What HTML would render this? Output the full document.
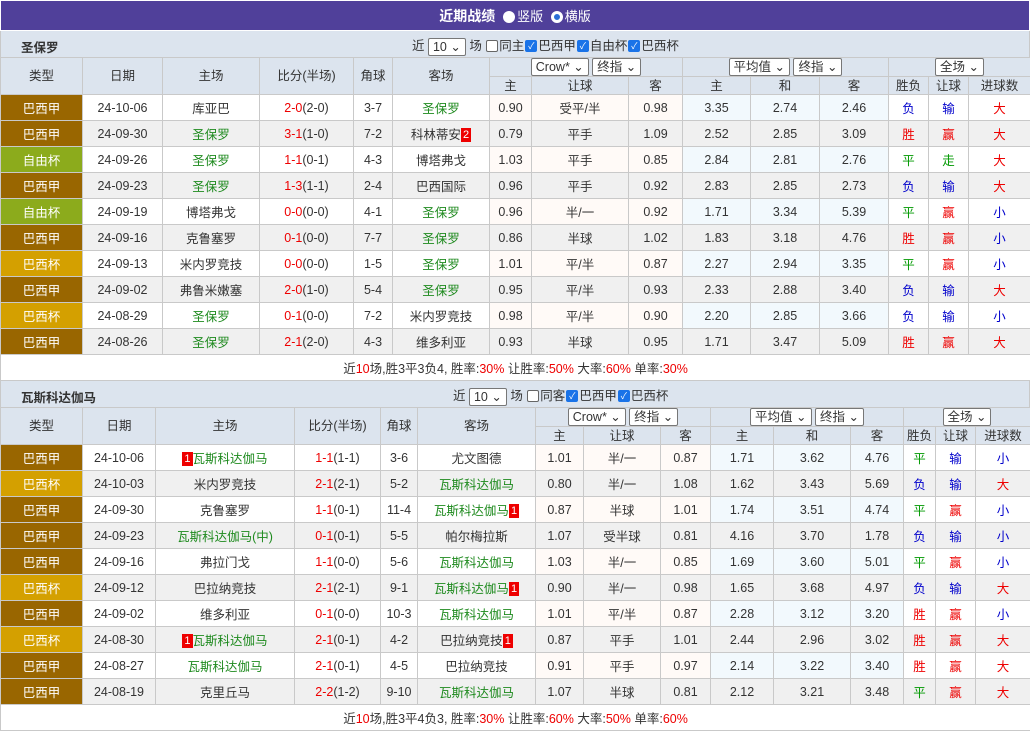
<!DOCTYPE html><html><head><meta charset="utf-8"><style>
*{box-sizing:border-box;margin:0;padding:0}
body{width:1030px;height:735px;background:#fff;font-family:"Liberation Sans","Noto Sans CJK SC",sans-serif;font-size:12.5px;color:#333;overflow:hidden}
.title{height:31px;background:#50409a;color:#fff;text-align:center;font-weight:bold;font-size:14px;line-height:31px;border:1px solid #fff}
.title span{font-weight:normal;font-size:13px}
.rad{display:inline-block;width:12px;height:12px;border-radius:50%;background:#fff;vertical-align:-2px;margin:0 2px 0 4px}
.rad.on{border:3px solid #fff;background:#2a6fd6;box-shadow:0 0 0 1px #2a6fd6 inset}
.bar{height:26px;background:#dce4ee;position:relative;border-left:1px solid #c9c9c9;border-right:1px solid #c9c9c9}
.bar .nm{position:absolute;left:20px;top:6px;font-weight:bold;font-size:12.5px;color:#333}
.bar .ct{position:absolute;top:4px;font-size:12.5px;color:#333;white-space:nowrap}
.sel{display:inline-block;border:1px solid #777;background:#fff;height:18px;line-height:16px;padding:0 4px;border-radius:2px;vertical-align:middle;font-size:12.5px}
.cb{display:inline-block;width:12px;height:12px;border:1px solid #666;border-radius:2px;background:#fff;vertical-align:-2px;margin:0 1px;overflow:hidden}
.cb.on{background:#1a73e8;border-color:#1a73e8;color:#fff;font-size:9px;line-height:10px;text-align:center;font-style:normal}
table{border-collapse:collapse;table-layout:fixed;width:1030px}
td{border:1px solid #c9c9c9;text-align:center;white-space:nowrap;overflow:hidden;height:26px;padding:0}
.h td{background:#dce4ee;height:18px;line-height:16px}
.h td.big{height:36px}
.lg{color:#fff}
.a{background:#996600}.b{background:#8cab1c}.c{background:#d4a000}
.g{color:#1e8a1e}.r{color:#e00}.bl{color:#00c}.gr{color:#090}
.ya{background:#fffaf7}.eu{background:#f2f9fd}
tr.e td{background:#f0f0f0}
tr.e td.lg.a{background:#996600}tr.e td.lg.b{background:#8cab1c}tr.e td.lg.c{background:#d4a000}
.rc{display:inline-block;background:#e00;color:#fff;font-size:11px;line-height:14px;padding:0 2px;vertical-align:1px}
.sum td{height:26px;text-align:right;padding-right:10px;background:#fff}
</style></head><body>
<div class="title">近期战绩 <span><i class="rad"></i>竖版 <i class="rad on"></i>横版</span></div>
<div class="bar"><span class="nm">圣保罗</span><span class="ct" style="left:411px">近 <span class="sel">10 ⌄</span> 场 <i class="cb"></i>同主<i class="cb on">✓</i>巴西甲<i class="cb on">✓</i>自由杯<i class="cb on">✓</i>巴西杯</span></div>
<table>
<colgroup><col style="width:82px"><col style="width:80px"><col style="width:97px"><col style="width:94px"><col style="width:39px"><col style="width:97px"><col style="width:42px"><col style="width:97px"><col style="width:54px"><col style="width:68px"><col style="width:69px"><col style="width:69px"><col style="width:40px"><col style="width:40px"><col style="width:62px"></colgroup>
<tr class="h"><td rowspan="2" class="big">类型</td><td rowspan="2">日期</td><td rowspan="2">主场</td><td rowspan="2">比分(半场)</td><td rowspan="2">角球</td><td rowspan="2">客场</td><td colspan="3"><span class="sel">Crow* ⌄</span> <span class="sel">终指 ⌄</span></td><td colspan="3"><span class="sel">平均值 ⌄</span> <span class="sel">终指 ⌄</span></td><td colspan="3"><span class="sel">全场 ⌄</span></td></tr>
<tr class="h"><td>主</td><td>让球</td><td>客</td><td>主</td><td>和</td><td>客</td><td>胜负</td><td>让球</td><td>进球数</td></tr>
<tr><td class="lg a">巴西甲</td><td>24-10-06</td><td>库亚巴</td><td><span class="r">2-0</span>(2-0)</td><td>3-7</td><td class="g">圣保罗</td><td class="ya">0.90</td><td class="ya">受平/半</td><td class="ya">0.98</td><td class="eu">3.35</td><td class="eu">2.74</td><td class="eu">2.46</td><td class="bl">负</td><td class="bl">输</td><td class="r">大</td></tr>
<tr class="e"><td class="lg a">巴西甲</td><td>24-09-30</td><td class="g">圣保罗</td><td><span class="r">3-1</span>(1-0)</td><td>7-2</td><td>科林蒂安<span class="rc">2</span></td><td>0.79</td><td>平手</td><td>1.09</td><td>2.52</td><td>2.85</td><td>3.09</td><td class="r">胜</td><td class="r">赢</td><td class="r">大</td></tr>
<tr><td class="lg b">自由杯</td><td>24-09-26</td><td class="g">圣保罗</td><td><span class="r">1-1</span>(0-1)</td><td>4-3</td><td>博塔弗戈</td><td class="ya">1.03</td><td class="ya">平手</td><td class="ya">0.85</td><td class="eu">2.84</td><td class="eu">2.81</td><td class="eu">2.76</td><td class="gr">平</td><td class="gr">走</td><td class="r">大</td></tr>
<tr class="e"><td class="lg a">巴西甲</td><td>24-09-23</td><td class="g">圣保罗</td><td><span class="r">1-3</span>(1-1)</td><td>2-4</td><td>巴西国际</td><td>0.96</td><td>平手</td><td>0.92</td><td>2.83</td><td>2.85</td><td>2.73</td><td class="bl">负</td><td class="bl">输</td><td class="r">大</td></tr>
<tr><td class="lg b">自由杯</td><td>24-09-19</td><td>博塔弗戈</td><td><span class="r">0-0</span>(0-0)</td><td>4-1</td><td class="g">圣保罗</td><td class="ya">0.96</td><td class="ya">半/一</td><td class="ya">0.92</td><td class="eu">1.71</td><td class="eu">3.34</td><td class="eu">5.39</td><td class="gr">平</td><td class="r">赢</td><td class="bl">小</td></tr>
<tr class="e"><td class="lg a">巴西甲</td><td>24-09-16</td><td>克鲁塞罗</td><td><span class="r">0-1</span>(0-0)</td><td>7-7</td><td class="g">圣保罗</td><td>0.86</td><td>半球</td><td>1.02</td><td>1.83</td><td>3.18</td><td>4.76</td><td class="r">胜</td><td class="r">赢</td><td class="bl">小</td></tr>
<tr><td class="lg c">巴西杯</td><td>24-09-13</td><td>米内罗竞技</td><td><span class="r">0-0</span>(0-0)</td><td>1-5</td><td class="g">圣保罗</td><td class="ya">1.01</td><td class="ya">平/半</td><td class="ya">0.87</td><td class="eu">2.27</td><td class="eu">2.94</td><td class="eu">3.35</td><td class="gr">平</td><td class="r">赢</td><td class="bl">小</td></tr>
<tr class="e"><td class="lg a">巴西甲</td><td>24-09-02</td><td>弗鲁米嫩塞</td><td><span class="r">2-0</span>(1-0)</td><td>5-4</td><td class="g">圣保罗</td><td>0.95</td><td>平/半</td><td>0.93</td><td>2.33</td><td>2.88</td><td>3.40</td><td class="bl">负</td><td class="bl">输</td><td class="r">大</td></tr>
<tr><td class="lg c">巴西杯</td><td>24-08-29</td><td class="g">圣保罗</td><td><span class="r">0-1</span>(0-0)</td><td>7-2</td><td>米内罗竞技</td><td class="ya">0.98</td><td class="ya">平/半</td><td class="ya">0.90</td><td class="eu">2.20</td><td class="eu">2.85</td><td class="eu">3.66</td><td class="bl">负</td><td class="bl">输</td><td class="bl">小</td></tr>
<tr class="e"><td class="lg a">巴西甲</td><td>24-08-26</td><td class="g">圣保罗</td><td><span class="r">2-1</span>(2-0)</td><td>4-3</td><td>维多利亚</td><td>0.93</td><td>半球</td><td>0.95</td><td>1.71</td><td>3.47</td><td>5.09</td><td class="r">胜</td><td class="r">赢</td><td class="r">大</td></tr>
<tr class="sum"><td colspan="15" style="text-align:center;padding:0">近<span class="r">10</span>场,胜3平3负4, 胜率:<span class="r">30%</span> 让胜率:<span class="r">50%</span> 大率:<span class="r">60%</span> 单率:<span class="r">30%</span></td></tr>
</table>
<div class="bar"><span class="nm">瓦斯科达伽马</span><span class="ct" style="left:452px">近 <span class="sel">10 ⌄</span> 场 <i class="cb"></i>同客<i class="cb on">✓</i>巴西甲<i class="cb on">✓</i>巴西杯</span></div>
<table>
<colgroup><col style="width:82px"><col style="width:73px"><col style="width:139px"><col style="width:86px"><col style="width:37px"><col style="width:118px"><col style="width:48px"><col style="width:77px"><col style="width:50px"><col style="width:63px"><col style="width:77px"><col style="width:53px"><col style="width:32px"><col style="width:40px"><col style="width:55px"></colgroup>
<tr class="h"><td rowspan="2" class="big">类型</td><td rowspan="2">日期</td><td rowspan="2">主场</td><td rowspan="2">比分(半场)</td><td rowspan="2">角球</td><td rowspan="2">客场</td><td colspan="3"><span class="sel">Crow* ⌄</span> <span class="sel">终指 ⌄</span></td><td colspan="3"><span class="sel">平均值 ⌄</span> <span class="sel">终指 ⌄</span></td><td colspan="3"><span class="sel">全场 ⌄</span></td></tr>
<tr class="h"><td>主</td><td>让球</td><td>客</td><td>主</td><td>和</td><td>客</td><td>胜负</td><td>让球</td><td>进球数</td></tr>
<tr><td class="lg a">巴西甲</td><td>24-10-06</td><td class="g"><span class="rc">1</span>瓦斯科达伽马</td><td><span class="r">1-1</span>(1-1)</td><td>3-6</td><td>尤文图德</td><td class="ya">1.01</td><td class="ya">半/一</td><td class="ya">0.87</td><td class="eu">1.71</td><td class="eu">3.62</td><td class="eu">4.76</td><td class="gr">平</td><td class="bl">输</td><td class="bl">小</td></tr>
<tr class="e"><td class="lg c">巴西杯</td><td>24-10-03</td><td>米内罗竞技</td><td><span class="r">2-1</span>(2-1)</td><td>5-2</td><td class="g">瓦斯科达伽马</td><td>0.80</td><td>半/一</td><td>1.08</td><td>1.62</td><td>3.43</td><td>5.69</td><td class="bl">负</td><td class="bl">输</td><td class="r">大</td></tr>
<tr><td class="lg a">巴西甲</td><td>24-09-30</td><td>克鲁塞罗</td><td><span class="r">1-1</span>(0-1)</td><td>11-4</td><td class="g">瓦斯科达伽马<span class="rc">1</span></td><td class="ya">0.87</td><td class="ya">半球</td><td class="ya">1.01</td><td class="eu">1.74</td><td class="eu">3.51</td><td class="eu">4.74</td><td class="gr">平</td><td class="r">赢</td><td class="bl">小</td></tr>
<tr class="e"><td class="lg a">巴西甲</td><td>24-09-23</td><td class="g">瓦斯科达伽马(中)</td><td><span class="r">0-1</span>(0-1)</td><td>5-5</td><td>帕尔梅拉斯</td><td>1.07</td><td>受半球</td><td>0.81</td><td>4.16</td><td>3.70</td><td>1.78</td><td class="bl">负</td><td class="bl">输</td><td class="bl">小</td></tr>
<tr><td class="lg a">巴西甲</td><td>24-09-16</td><td>弗拉门戈</td><td><span class="r">1-1</span>(0-0)</td><td>5-6</td><td class="g">瓦斯科达伽马</td><td class="ya">1.03</td><td class="ya">半/一</td><td class="ya">0.85</td><td class="eu">1.69</td><td class="eu">3.60</td><td class="eu">5.01</td><td class="gr">平</td><td class="r">赢</td><td class="bl">小</td></tr>
<tr class="e"><td class="lg c">巴西杯</td><td>24-09-12</td><td>巴拉纳竞技</td><td><span class="r">2-1</span>(2-1)</td><td>9-1</td><td class="g">瓦斯科达伽马<span class="rc">1</span></td><td>0.90</td><td>半/一</td><td>0.98</td><td>1.65</td><td>3.68</td><td>4.97</td><td class="bl">负</td><td class="bl">输</td><td class="r">大</td></tr>
<tr><td class="lg a">巴西甲</td><td>24-09-02</td><td>维多利亚</td><td><span class="r">0-1</span>(0-0)</td><td>10-3</td><td class="g">瓦斯科达伽马</td><td class="ya">1.01</td><td class="ya">平/半</td><td class="ya">0.87</td><td class="eu">2.28</td><td class="eu">3.12</td><td class="eu">3.20</td><td class="r">胜</td><td class="r">赢</td><td class="bl">小</td></tr>
<tr class="e"><td class="lg c">巴西杯</td><td>24-08-30</td><td class="g"><span class="rc">1</span>瓦斯科达伽马</td><td><span class="r">2-1</span>(0-1)</td><td>4-2</td><td>巴拉纳竞技<span class="rc">1</span></td><td>0.87</td><td>平手</td><td>1.01</td><td>2.44</td><td>2.96</td><td>3.02</td><td class="r">胜</td><td class="r">赢</td><td class="r">大</td></tr>
<tr><td class="lg a">巴西甲</td><td>24-08-27</td><td class="g">瓦斯科达伽马</td><td><span class="r">2-1</span>(0-1)</td><td>4-5</td><td>巴拉纳竞技</td><td class="ya">0.91</td><td class="ya">平手</td><td class="ya">0.97</td><td class="eu">2.14</td><td class="eu">3.22</td><td class="eu">3.40</td><td class="r">胜</td><td class="r">赢</td><td class="r">大</td></tr>
<tr class="e"><td class="lg a">巴西甲</td><td>24-08-19</td><td>克里丘马</td><td><span class="r">2-2</span>(1-2)</td><td>9-10</td><td class="g">瓦斯科达伽马</td><td>1.07</td><td>半球</td><td>0.81</td><td>2.12</td><td>3.21</td><td>3.48</td><td class="gr">平</td><td class="r">赢</td><td class="r">大</td></tr>
<tr class="sum"><td colspan="15" style="text-align:center;padding:0">近<span class="r">10</span>场,胜3平4负3, 胜率:<span class="r">30%</span> 让胜率:<span class="r">60%</span> 大率:<span class="r">50%</span> 单率:<span class="r">60%</span></td></tr>
</table>
</body></html>
